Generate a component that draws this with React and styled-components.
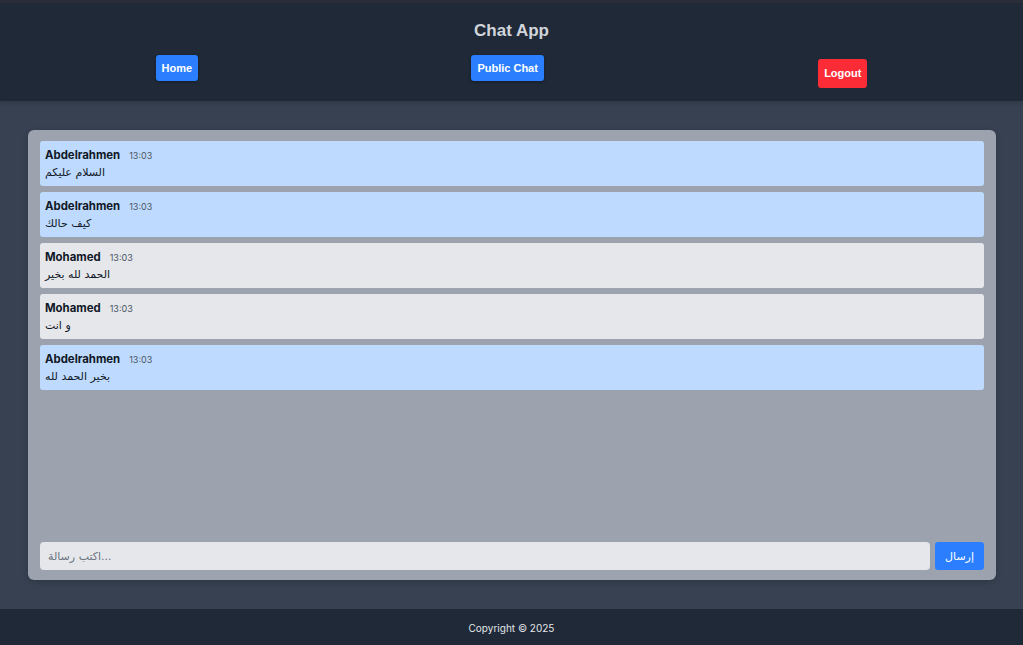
import React from 'react';
import styled, { createGlobalStyle } from 'styled-components';

const messages = [
	{ id: 1, user: 'Abdelrahmen', time: '13:03', text: 'السلام عليكم', mine: true },
	{ id: 2, user: 'Abdelrahmen', time: '13:03', text: 'كيف حالك', mine: true },
	{ id: 3, user: 'Mohamed', time: '13:03', text: 'الحمد لله بخير', mine: false },
	{ id: 4, user: 'Mohamed', time: '13:03', text: 'و انت', mine: false },
	{ id: 5, user: 'Abdelrahmen', time: '13:03', text: 'بخير الحمد لله', mine: true },
];

const App = () => {
	return (
		<>
			<GlobalStyle />
			<Page>
				<Header>
					<Title>Chat App</Title>
					<Nav>
						<NavButton href="/#">Home</NavButton>
						<NavButton href="/#">Public Chat</NavButton>
						<LogoutButton type="button">Logout</LogoutButton>
					</Nav>
				</Header>

				<Main>
					<ChatCard>
						<MessageList>
							{messages.map((m) => (
								<Message key={m.id} mine={m.mine}>
									<MessageHead>
										<UserName>{m.user}</UserName>
										<Time>{m.time}</Time>
									</MessageHead>
									<MessageText>{m.text}</MessageText>
								</Message>
							))}
						</MessageList>

						<InputRow>
							<MessageInput placeholder="اكتب رسالة..." />
							<SendButton type="button">إرسال</SendButton>
						</InputRow>
					</ChatCard>
				</Main>

				<Footer>Copyright © 2025</Footer>
			</Page>
		</>
	);
};

const GlobalStyle = createGlobalStyle`
	* { box-sizing: border-box; }
	html, body { margin: 0; padding: 0; }
	body {
		font-family: Inter, "Noto Sans", sans-serif;
		background: #374151;
	}
`;

const Page = styled.div`
	min-height: 100vh;
	display: flex;
	flex-direction: column;
`;

const Header = styled.header`
	background: #1f2937;
	border-top: 3px solid #2a2c37;
	padding: 14px 19px 13px;
	box-shadow: 0 2px 4px rgba(0, 0, 0, 0.15);
`;

const Title = styled.h1`
	margin: 0;
	text-align: center;
	font-family: "Liberation Sans", Arial, sans-serif;
	font-size: 17px;
	line-height: 28px;
	font-weight: 700;
	color: #d1d5db;
`;

const Nav = styled.nav`
	display: flex;
	justify-content: space-around;
	align-items: flex-start;
	margin-top: 10px;
	height: 33px;
`;

const NavButton = styled.a`
	display: inline-block;
	background: #2b7fff;
	color: #fff;
	font-family: "Liberation Sans", Arial, sans-serif;
	font-size: 11px;
	font-weight: 700;
	line-height: 14px;
	padding: 6px 6px;
	border-radius: 3px;
	text-decoration: none;
	box-shadow: 0 1px 3px rgba(0, 0, 0, 0.3);
`;

const LogoutButton = styled.button`
	margin-top: 4px;
	margin-left: 1px;
	background: #fb2c36;
	color: #fff;
	border: none;
	font-family: "Liberation Sans", Arial, sans-serif;
	font-size: 11px;
	font-weight: 700;
	line-height: 15px;
	padding: 7px 6px;
	border-radius: 3px;
	cursor: pointer;
`;

const Main = styled.main`
	flex: 1;
	display: flex;
	padding: 29px 27px 29px 28px;
`;

const ChatCard = styled.div`
	flex: 1;
	display: flex;
	flex-direction: column;
	background: #9ca3af;
	border-radius: 6px;
	padding: 11px 12px 10px;
	box-shadow: 0 2px 6px rgba(0, 0, 0, 0.15);
`;

const MessageList = styled.div`
	flex: 1;
	display: flex;
	flex-direction: column;
	gap: 6px;
`;

const Message = styled.div`
	background: ${({ mine }) => (mine ? '#bedbff' : '#e5e7eb')};
	border-radius: 3px;
	padding: 6px 5px 7px;
	height: 45px;
`;

const MessageHead = styled.div`
	display: flex;
	align-items: baseline;
	gap: 9px;
	line-height: 16px;
`;

const UserName = styled.span`
	font-size: 11.4px;
	font-weight: 700;
	color: #111827;
`;

const Time = styled.span`
	font-size: 9px;
	color: #4b5563;
`;

const MessageText = styled.div`
	font-family: "DejaVu Sans", "Noto Sans", sans-serif;
	font-size: 11px;
	line-height: 16px;
	padding-top: 1px;
	color: #111827;
`;

const InputRow = styled.div`
	display: flex;
	gap: 5px;
	height: 28px;
`;

const MessageInput = styled.input`
	flex: 1;
	border: none;
	outline: none;
	background: #e5e7eb;
	border-radius: 4px;
	padding: 0 8px;
	font-family: "DejaVu Sans", "Noto Sans", sans-serif;
	font-size: 11px;
	color: #111827;

	&::placeholder {
		color: #6b7280;
	}
`;

const SendButton = styled.button`
	width: 49px;
	border: none;
	background: #2b7fff;
	color: #fff;
	border-radius: 3px;
	font-family: "DejaVu Sans", "Noto Sans", sans-serif;
	font-size: 11px;
	cursor: pointer;
`;

const Footer = styled.footer`
	background: #1f2937;
	color: #e5e7eb;
	text-align: center;
	font-size: 10px;
	line-height: 38px;
	height: 36px;
`;

export default App;
